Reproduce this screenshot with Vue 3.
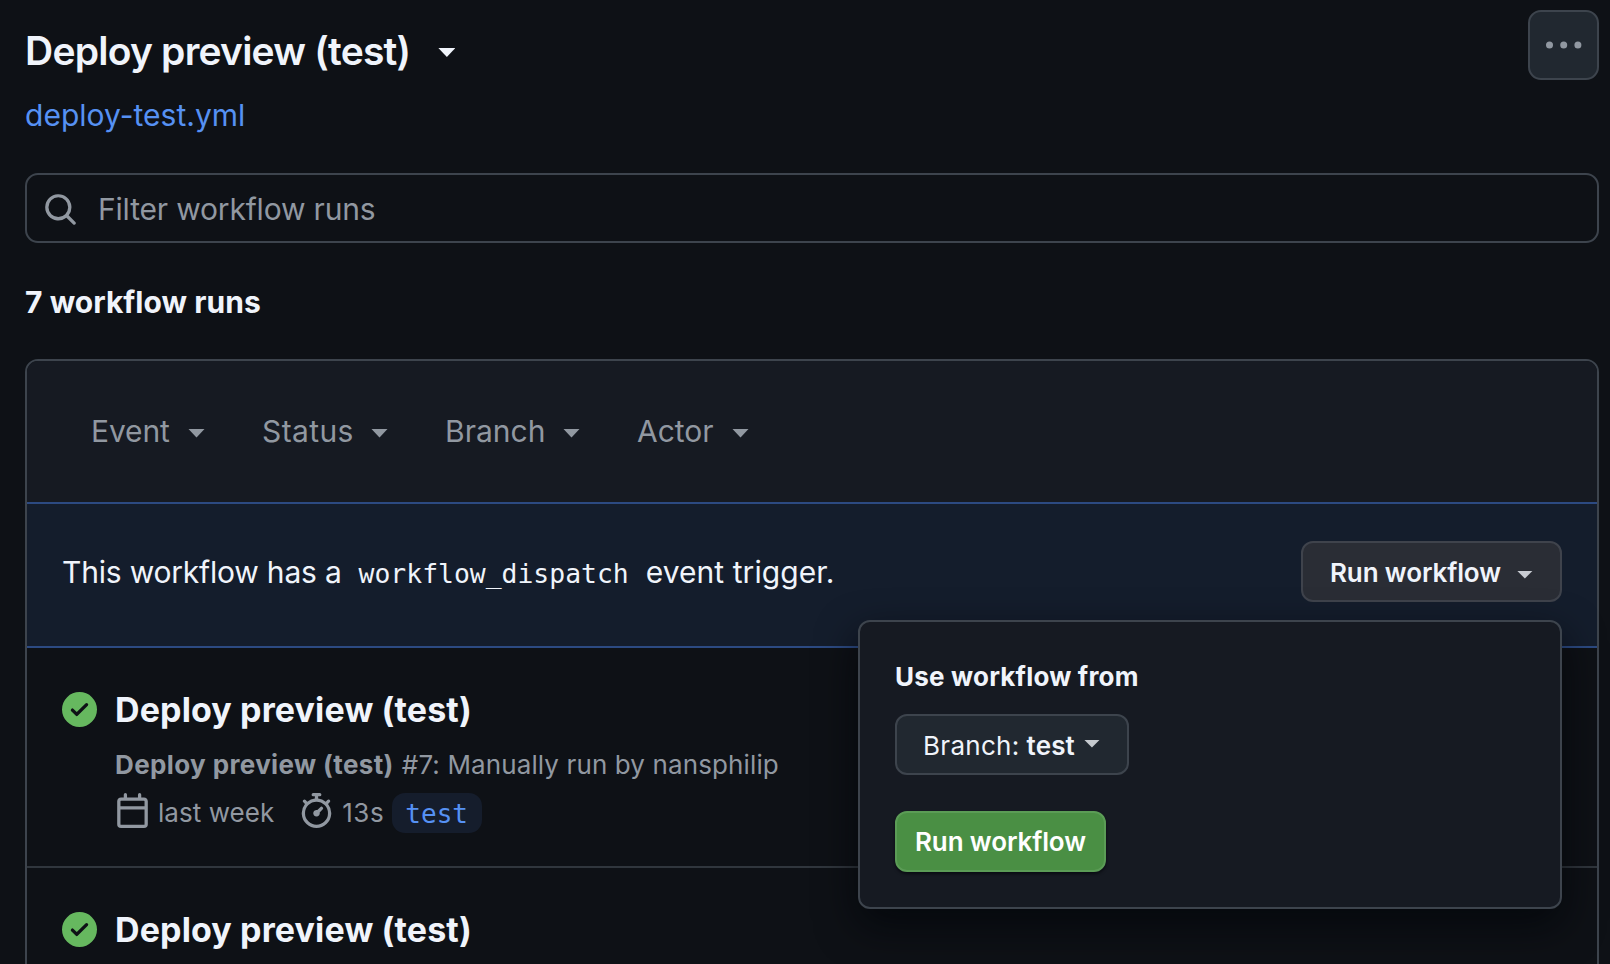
<script setup>
const filters = [
  { label: 'Event', cls: 'event' },
  { label: 'Status', cls: 'status' },
  { label: 'Branch', cls: 'branch' },
  { label: 'Actor', cls: 'actor' }
]
const runs = [
  { id: 7, title: 'Deploy preview (test)', by: 'Manually run by nansphilip', when: 'last week', took: '13s', ref: 'test' },
  { id: 6, title: 'Deploy preview (test)' }
]
</script>

<template>
  <main class="page">
    <header class="header">
      <div class="heading">
        <h1 class="title">Deploy preview (test)<i class="caret"></i></h1>
        <a class="file">deploy-test.yml</a>
      </div>
      <button class="kebab" aria-label="More options">
        <svg width="36" height="8" viewBox="0 0 36 8"><circle cx="3.5" cy="4" r="3.5" /><circle cx="17.7" cy="4" r="3.5" /><circle cx="31.9" cy="4" r="3.5" /></svg>
      </button>
    </header>

    <div class="search">
      <svg class="icon" viewBox="0 0 16 16"><path d="M10.68 11.74a6 6 0 0 1-7.922-8.982 6 6 0 0 1 8.982 7.922l3.04 3.04a.749.749 0 0 1-.326 1.275.749.749 0 0 1-.734-.215ZM11.5 7a4.499 4.499 0 1 0-8.997 0A4.499 4.499 0 0 0 11.5 7Z" /></svg>
      <span>Filter workflow runs</span>
    </div>

    <h2 class="count">7 workflow runs</h2>

    <section class="list">
      <div class="filters">
        <div v-for="f in filters" :key="f.label" class="filter" :class="f.cls"><span>{{ f.label }}</span><i class="caret"></i></div>
      </div>

      <div class="dispatch">
        <p class="notice"><span class="lead">This workflow has a</span><code>workflow_dispatch</code><span class="tail">event trigger.</span></p>
        <div class="menu">
          <button class="btn toggle">Run workflow<i class="caret"></i></button>
          <div class="popover">
            <p class="label">Use workflow from</p>
            <button class="btn select"><span>Branch:</span><b>test</b><i class="caret"></i></button>
            <button class="btn primary">Run workflow</button>
          </div>
        </div>
      </div>

      <article v-for="run in runs" :key="run.id" class="run">
        <svg class="icon ok" viewBox="0 0 16 16"><path d="M8 16A8 8 0 1 1 8 0a8 8 0 0 1 0 16Zm3.78-9.72a.751.751 0 0 0-.018-1.042.751.751 0 0 0-1.042-.018L6.75 9.19 5.28 7.72a.751.751 0 0 0-1.042.018.751.751 0 0 0-.018 1.042l2 2a.75.75 0 0 0 1.06 0Z" /></svg>
        <div class="body">
          <h3 class="run-title">{{ run.title }}</h3>
          <p v-if="run.by" class="sub"><b>{{ run.title }}</b><span>#{{ run.id }}: {{ run.by }}</span></p>
          <div v-if="run.when" class="meta">
            <svg class="icon cal" viewBox="0 0 16 16"><path d="M4.75 0a.75.75 0 0 1 .75.75V2h5V.75a.75.75 0 0 1 1.5 0V2h1.25c.966 0 1.75.784 1.75 1.75v10.5A1.75 1.75 0 0 1 13.25 16H2.75A1.75 1.75 0 0 1 1 14.25V3.75C1 2.784 1.784 2 2.75 2H4V.75A.75.75 0 0 1 4.75 0ZM2.5 7.5v6.75c0 .138.112.25.25.25h10.5a.25.25 0 0 0 .25-.25V7.5Zm10.75-4H2.75a.25.25 0 0 0-.25.25V6h11V3.75a.25.25 0 0 0-.25-.25Z" /></svg>
            <span class="when">{{ run.when }}</span>
            <svg class="icon watch" viewBox="0 0 16 16"><path d="M5.75.75A.75.75 0 0 1 6.5 0h3a.75.75 0 0 1 0 1.5h-.75v1l-.001.041a6.724 6.724 0 0 1 3.464 1.435l.007-.006.75-.75a.749.749 0 0 1 1.275.326.749.749 0 0 1-.215.734l-.75.75-.006.007a6.75 6.75 0 1 1-10.548 0L2.72 5.03l-.75-.75a.751.751 0 0 1 .018-1.042.751.751 0 0 1 1.042-.018l.75.75.007.006A6.72 6.72 0 0 1 7.25 2.541V1.5H6.5a.75.75 0 0 1-.75-.75ZM8 14.5a5.25 5.25 0 1 0-.001-10.501A5.25 5.25 0 0 0 8 14.5Zm.389-6.7 1.33-1.33a.75.75 0 1 1 1.061 1.06L9.45 8.861A1.503 1.503 0 0 1 8 10.75a1.499 1.499 0 1 1 .389-2.95Z" /></svg>
            <span class="took">{{ run.took }}</span>
            <span class="pill">{{ run.ref }}</span>
          </div>
        </div>
      </article>
    </section>
  </main>
</template>

<style>
html, body { background: #0e1116; overflow: hidden; }
</style>

<style scoped>
* { box-sizing: border-box; margin: 0; padding: 0; }
.page {
  height: 964px; overflow: hidden; padding: 10px 11px 0 25px;
  display: flex; flex-direction: column;
  background: #0e1116; color: #f0f4fb;
  font-family: Inter, "Liberation Sans", sans-serif; font-size: 30px;
}
button { font: inherit; color: inherit; }
.icon { width: 35px; height: 35px; flex: none; fill: currentColor; display: block; }
.caret { flex: none; width: 17px; height: 9px; background: currentColor; clip-path: polygon(0 0, 100% 0, 50% 100%); }

.header { display: flex; justify-content: space-between; align-items: flex-start; height: 125px; }
.heading { padding-top: 17px; }
.title { display: flex; align-items: center; font-size: 39px; line-height: 48px; font-weight: 600; letter-spacing: -0.78px; white-space: nowrap; }
.title .caret { margin: 3px 0 0 28px; }
.file { display: block; margin-top: 20px; line-height: 40px; letter-spacing: 0.02px; color: #5691f3; }
.kebab { width: 71px; height: 70px; display: flex; align-items: center; justify-content: center; border: 2px solid #3d444d; border-radius: 13px; background: #212830; color: #9198a1; }
.kebab svg { fill: currentColor; margin-bottom: 1px; }

.search { flex: none; margin-top: 38px; height: 70px; display: flex; align-items: center; gap: 20px; padding: 2px 16px 0; border: 2px solid #3d444d; border-radius: 13px; color: #9198a1; }
.search span { letter-spacing: -0.18px; }
.search .icon { margin-top: 1px; }
.count { margin-top: 39px; font-size: 30px; line-height: 40px; font-weight: 700; letter-spacing: 0.04px; }

.list { flex: none; margin-top: 37px; height: 700px; border: 2px solid #3d444d; border-radius: 13px 13px 0 0; }
.filters { height: 141px; display: flex; align-items: center; padding: 0 0 2px 64px; background: #161a22; border-radius: 11px 11px 0 0; color: #9198a1; }
.filter { display: flex; align-items: center; line-height: 40px; white-space: nowrap; }
.filter .caret { margin-top: 5px; }
.event { width: 171px; letter-spacing: -0.13px; }
.event span { width: 97px; }
.status { width: 183px; letter-spacing: 0.378px; }
.status span { width: 109px; }
.branch { width: 192px; letter-spacing: 0; }
.branch span { width: 118px; }
.actor { letter-spacing: 0; }
.actor span { width: 95px; }

.dispatch { height: 146px; display: flex; align-items: center; justify-content: space-between; padding: 0 35px 7px 35px; border: solid #2c4a82; border-width: 2px 0; background: #141d2c; }
.notice { display: flex; align-items: baseline; line-height: 40px; white-space: nowrap; padding-top: 2px; }
.lead { letter-spacing: -0.2px; }
.tail { letter-spacing: 0.06px; }
code { font: 26.4px/40px "DejaVu Sans Mono", monospace; margin: 0 17px; }
.menu { position: relative; }
.btn { height: 61px; display: flex; align-items: center; border: 2px solid #3d444d; border-radius: 12px; font-size: 26px; white-space: nowrap; }
.toggle { width: 261px; padding: 2px 0 0 27px; background: #2a2d35; border-color: #3f434c; font-weight: 600; letter-spacing: -0.12px; }
.toggle .caret { margin: 4px 0 0 16px; width: 16px; height: 8px; background: #c9ccd3; }

.popover { position: absolute; z-index: 2; top: 79px; right: 0; width: 704px; height: 289px; padding: 35px 35px; border: 2px solid #3d444d; border-radius: 12px; background: #161a22; box-shadow: 0 16px 40px rgba(1, 4, 9, 0.7); }
.label { font-size: 26px; line-height: 40px; font-weight: 700; letter-spacing: 0.2px; }
.select { margin-top: 17px; width: 234px; padding: 2px 0 0 26px; background: #212830; }
.select span { letter-spacing: 0.3px; }
.select b { font-weight: 600; margin-left: 7px; letter-spacing: 0.14px; }
.select .caret { margin: 0 0 4px 9px; width: 16px; height: 8px; background: #c6cacf; }
.primary { margin-top: 36px; width: 211px; padding-left: 18px; background: #4a8f44; border-color: #5b9c56; color: #fff; font-weight: 600; letter-spacing: -0.12px; box-shadow: 0 2px 3px rgba(1, 4, 9, 0.6); }

.run { height: 220px; display: flex; align-items: flex-start; padding: 41px 0 0 35px; border-bottom: 2px solid #30363d; }
.ok { margin-top: 3px; color: #66b85f; }
.body { margin-left: 18px; white-space: nowrap; }
.run-title { font-size: 34px; line-height: 42px; font-weight: 700; letter-spacing: 0.13px; }
.sub { display: flex; margin-top: 14px; font-size: 26px; line-height: 40px; color: #9198a1; }
.sub b { font-weight: 700; letter-spacing: 0.38px; }
.sub span { margin-left: 8px; letter-spacing: 0.118px; }
.meta { display: flex; align-items: center; margin-top: 8px; height: 40px; font-size: 26px; line-height: 40px; color: #9198a1; }
.cal, .watch { align-self: flex-start; }
.when { margin-left: 8px; letter-spacing: 0.05px; }
.watch { margin-left: 25px; }
.took { margin-left: 8px; letter-spacing: 0.5px; }
.pill { margin-left: 8px; width: 90px; height: 40px; padding-right: 1px; border-radius: 13px; background: #151d2c; color: #5691f3; font: 26px/42px "DejaVu Sans Mono", monospace; text-align: center; }
</style>
